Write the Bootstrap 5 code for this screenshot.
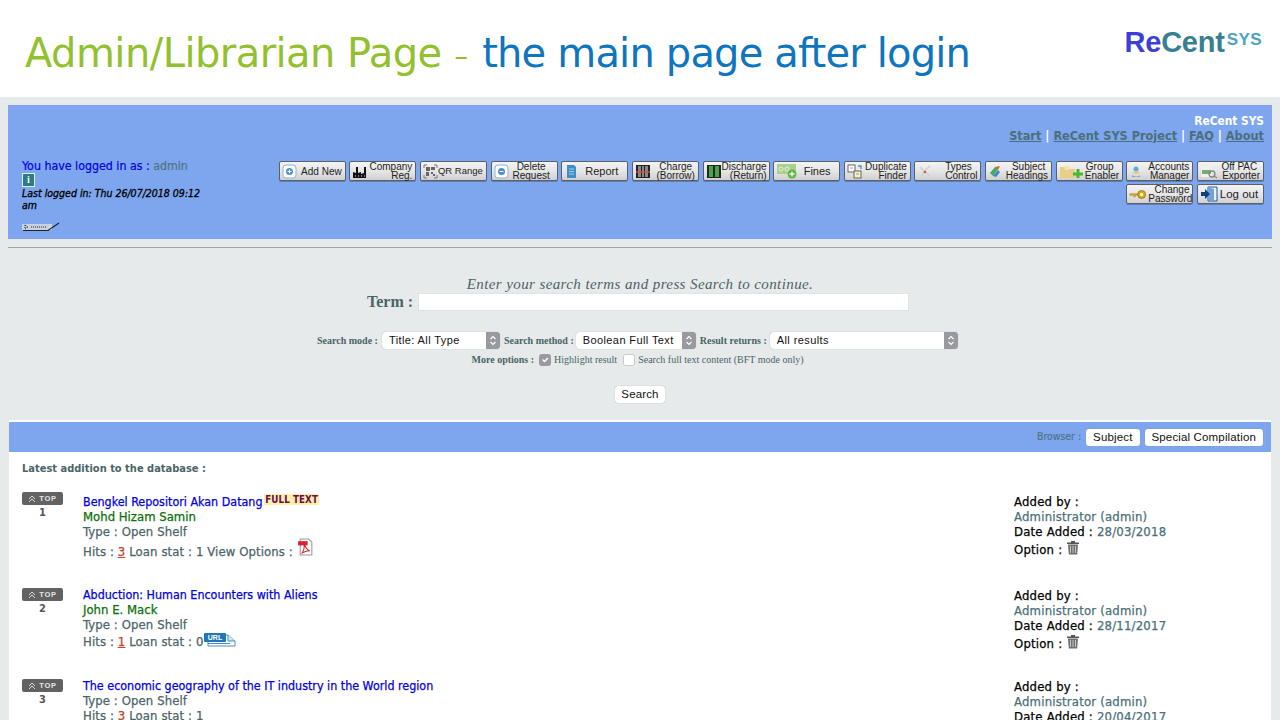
<!DOCTYPE html>
<html lang="en">
<head>
    <meta charset="UTF-8">
    <meta name="viewport" content="width=device-width, initial-scale=1.0">
    <title>Admin/Librarian Page</title>
    <link href="https://cdn.jsdelivr.net/npm/bootstrap@5.3.0/dist/css/bootstrap.min.css" rel="stylesheet">
    <style>
        html, body { height: 720px; overflow: hidden; }
        body { background: #e6eaea; color: #4a6468; font-family: "DejaVu Sans Condensed", "DejaVu Sans", Verdana, sans-serif; font-stretch: condensed; font-size: 12px; }

        .slide-head { height: 97px; background: #fff; padding: 25px 10px 0 25px; }
        .slide-title { font-family: "DejaVu Sans", sans-serif; font-stretch: normal; font-size: 40px; line-height: 56px; margin: 0; font-weight: 400; letter-spacing: -.82px; color: #0f75bc; }
        .slide-title em { font-style: normal; color: #93c02f; letter-spacing: -.55px; }
        .slide-title span { color: #93c02f; font-size: 27px; margin: 0 3px 0 1px; vertical-align: 2px; }
        .logo-word { font-family: "Liberation Sans", sans-serif; font-weight: 700; font-size: 29px; line-height: 34px; letter-spacing: -.2px; margin-right: 8px; color: #37808f; }
        .logo-word b { color: #3b3fd8; }
        .logo-word sup { font-size: 17px; top: -7px; color: #4ba3bf; letter-spacing: .4px; margin-left: 2px; }

        .top-panel { background: #7ea6ee; margin: 8px 8px 0; height: 134px; padding: 9px 8px 0 14px; }
        .site-name { color: #fff; font-weight: 700; font-size: 11.8px; line-height: 14px; }
        .site-links { font-weight: 700; font-size: 12.6px; line-height: 16px; color: #fff; }
        .site-links a { color: #4a6f7c; }
        .user-col { width: 190px; flex-shrink: 0; margin-top: 15px; }
        .logged-as { color: #0000e0; font-size: 12.3px; line-height: 14px; -webkit-text-stroke: .2px; }
        .logged-as span { color: #4c757c; }
        .info-badge { display: block; width: 13px; height: 14px; background: #2f7c80; border: 1px solid #d8f0f0; color: #fff; font: 700 10px/12px "Liberation Serif", serif; text-align: center; margin: 0 0 1px; }
        .last-login { color: #000; font-style: italic; font-size: 10.5px; line-height: 11.5px; -webkit-text-stroke: .3px; }
        .ruler-pic { display: block; margin-top: 11px; }
        .tool-wrap { width: 986px; margin-left: auto; margin-top: 17px; }
        .tool-grid { display: flex; flex-wrap: wrap; justify-content: flex-end; column-gap: 3.65px; row-gap: 3px; }
        .tool-btn { width: 67px; height: 20px; padding: 0 2px; display: flex; align-items: center; border: 1px solid #59606a; border-radius: 2px; background: linear-gradient(#f4f4f4, #e4e4e4 55%, #d0d0d0); font-family: "Liberation Sans", Arial, sans-serif; font-stretch: normal; font-size: 10px; line-height: 9px; color: #222; box-shadow: 0 1px 0 #5f7fb5; }
        .tool-btn svg { flex-shrink: 0; }
        .tool-btn span { flex: 1; text-align: right; padding-right: 1px; white-space: nowrap; }
        .tool-btn span.tool-mid { text-align: center; line-height: 12px; font-size: 11px; }
        .tool-btn span.tool-two { text-align: center; line-height: 9px; }
        .tool-btn span.tool-big { text-align: center; line-height: 12px; font-size: 11.5px; }
        .tool-btn span.tool-tight { font-size: 9.5px; line-height: 12px; padding-right: 2px; }

        .rule-line { margin: 8px 8px 0; border-top: 1px solid #9fa5a5; opacity: 1; }
        .search-box { text-align: center; font-family: "Liberation Serif", "Times New Roman", serif; font-stretch: normal; height: 172px; padding-top: 27px; }
        .search-hint { font-style: italic; font-size: 15px; line-height: 18px; letter-spacing: .4px; }
        .term-row { padding-left: 367px; gap: 5px; }
        .term-label { font-weight: 700; font-size: 16px; line-height: 18px; }
        .term-input { width: 491px; height: 18px; border: 1px solid #dfe3e3; border-radius: 0; padding: 0 4px; min-height: 0; }
        .mode-row { margin-top: 21px; padding-left: 317px; font-size: 10px; font-weight: 700; }
        .mac-select { height: 17px; min-height: 0; margin: 0 5px 0 2px; padding: 0 14px 0 7px; border: 0; border-radius: 4px; font-family: "Liberation Sans", Arial, sans-serif; font-size: 11px; line-height: 17px; color: #111; letter-spacing: .4px; box-shadow: 0 0 1px #999;
            background: #fff url("data:image/svg+xml,%3Csvg xmlns='http://www.w3.org/2000/svg' width='14' height='17'%3E%3Crect width='14' height='17' fill='%23989aa0'/%3E%3Cpath d='M4.500 7 7 4.500 9.500 7M4.500 10 7 12.500 9.500 10' fill='none' stroke='%23fff' stroke-width='1.200'/%3E%3C/svg%3E") no-repeat right center; }
        .select-mode { width: 118px; margin-left: 4px; margin-right: 4px; }
        .select-method { width: 120px; margin-right: 4px; }
        .select-result { width: 188px; margin-left: 3px; }
        .more-row { margin-top: 2px; padding-right: 5px; font-size: 10px; line-height: 17px; }
        .more-row b { margin-right: 5px; }
        .more-row span { margin-left: 3px; }
        .opt-gap { margin-right: 6px; }
        .opt-check { width: 12px; height: 12px; margin: 0; border: 1px solid #c8c8c8; border-radius: 3px; background-color: #fff; }
        .opt-check:checked { background-color: #989aa0; border-color: #989aa0; }
        .plain-btn { padding: 0 7px; height: 17px; background: #fff; border: 0; border-radius: 3px; font-family: "Liberation Sans", Arial, sans-serif; font-stretch: normal; font-size: 11.5px; line-height: 17px; color: #111; letter-spacing: .15px; box-shadow: 0 0 1px #888; }
        .go-btn { margin-top: 18px; padding: 0 6px; }

        .result-box { background: #fff; margin: 0 9px; padding-top: 2px; height: 320px; }
        .browse-bar { background: #7ea6ee; height: 30px; padding-right: 8px; gap: 5px; font-size: 10.4px; color: #4d7585; -webkit-text-stroke: .2px; }
        .browse-bar .plain-btn { -webkit-text-stroke: 0; }
        .latest-head { font-weight: 700; font-size: 11px; line-height: 14px; padding: 10px 0 0 13px; margin-bottom: 16px; color: #4a6468; }
        .book-row { padding-left: 13px; }
        .rank-col { width: 61px; flex-shrink: 0; }
        .top-tag { width: 41px; height: 13px; background: #626262; border-radius: 2px; color: #e6e6e6; font-family: "Liberation Sans", Arial, sans-serif; font-stretch: normal; font-weight: 700; font-size: 7.5px; line-height: 13px; letter-spacing: .8px; gap: 3px; }
        .rank-num { width: 41px; text-align: center; font-weight: 700; font-size: 11px; line-height: 14px; margin-top: 1px; color: #555; }
        .book-main { width: 931px; flex-shrink: 0; margin-top: -1px; font-size: 13px; line-height: 15px; letter-spacing: .1px; -webkit-text-stroke: .25px; }
        .book-title { color: #0000e0; font-size: 12.4px; letter-spacing: 0; }
        .book-author { color: #0a700a; letter-spacing: 0; }
        .hits { margin-top: 2px; line-height: 16px; }
        .hits a { color: #b5472e; }
        .full-tag { background: #fdeeaa; color: #6a0a50; font-size: 9.7px; font-weight: 700; vertical-align: 3px; margin-left: -2px; padding: 0 1px; -webkit-text-stroke: 0; }
        .book-side { font-size: 13px; line-height: 15px; letter-spacing: .2px; color: #000; -webkit-text-stroke: .25px; }
        .book-side i { font-style: normal; color: #4a6f78; }
        .side-opt { margin-top: 3px; }
        .bin-icon { margin-top: -6px; vertical-align: -1px; }
        .row-one { height: 96px; }
        .row-one .book-main { margin-top: 0; }
        .row-one .hits { margin-top: 5px; }
        .row-one .book-side { padding-top: 2px; }
        .row-two { height: 91px; }
        .row-three .hits { margin-top: 0; }
        .pdf-icon { margin-top: -8px; vertical-align: 0; }
        .url-icon { margin-top: -8px; margin-left: -3px; vertical-align: -2px; }
    </style>
</head>
<body>
    <svg width="0" height="0" class="d-block position-absolute">
        <symbol id="ico-plus" viewBox="0 0 15 15"><rect x="1" y="1" width="13" height="13" rx="3" fill="#fff" stroke="#8fb4d8"/><circle cx="7.500" cy="7.500" r="3.500" fill="#4f8fd0"/><path d="M5.500 7.500h4M7.500 5.500v4" stroke="#fff"/></symbol>
        <symbol id="ico-minus" viewBox="0 0 15 15"><rect x="1" y="1" width="13" height="13" rx="3" fill="#fff" stroke="#8fb4d8"/><circle cx="7.500" cy="7.500" r="3.500" fill="#4f8fd0"/><path d="M5.500 7.500h4" stroke="#fff"/></symbol>
        <symbol id="ico-factory" viewBox="0 0 15 15"><path d="M1 14V8l3 1V3h2v6l3-1v2l3-1V3h2v11z" fill="#111"/><path d="M3 12h1M6 12h1M9 12h1M12 12h1" stroke="#ddd"/></symbol>
        <symbol id="ico-qr" viewBox="0 0 15 15"><path d="M1 4V1h3M11 1h3v3M14 11v3h-3M4 14H1v-3" fill="none" stroke="#777"/><path d="M3 3h4v4H3zM8 3h4v3H8zM3 8h3v4H3zM8 8h2v2H8zM10 10h2v2h-2z" fill="#666"/></symbol>
        <symbol id="ico-doc" viewBox="0 0 15 15"><path d="M3 1h7l2 2v11H3z" fill="#3f8fc4"/><path d="M5 5h5M5 7.500h5M5 10h5" stroke="#bfe0f2" stroke-width=".8"/></symbol>
        <symbol id="ico-charge" viewBox="0 0 16 15"><rect x="1" y="1" width="14" height="13" fill="#222"/><path d="M3 2h3v11H3zM7 2h2v11H7zM10 2h3v11h-3z" fill="#888"/><path d="M1 8h14" stroke="#e04848" stroke-width="1.400"/></symbol>
        <symbol id="ico-return" viewBox="0 0 16 15"><rect x="1" y="1" width="14" height="13" fill="#1e2a1e"/><path d="M3 2h4v11H3zM9 2h4v11H9z" fill="#4f9f4f"/></symbol>
        <symbol id="ico-fines" viewBox="0 0 22 16"><rect x="1" y="1" width="19" height="10" fill="#a9d08e"/><circle cx="5" cy="6" r="2" fill="none" stroke="#e6f2d8"/><circle cx="11" cy="6" r="2" fill="none" stroke="#e6f2d8"/><circle cx="16" cy="11" r="4.500" fill="#62b544"/><path d="M13.500 11h5M16 8.500v5" stroke="#fff" stroke-width="1.300"/></symbol>
        <symbol id="ico-dup" viewBox="0 0 16 15"><rect x="1" y="1" width="7" height="7" fill="#fff" stroke="#666"/><rect x="7" y="7" width="7" height="7" fill="#f6eecc" stroke="#666"/><path d="M11 2h3v3" fill="none" stroke="#3f8fc4" stroke-width="1.300"/><path d="M3 4h3M9 10h3" stroke="#999"/></symbol>
        <symbol id="ico-types" viewBox="0 0 18 15"><path d="M3 3l4 4 6-5M7 7l-2 6M7 7l6 5" fill="none" stroke="#cfcfcf" stroke-width="1.500"/><circle cx="8" cy="8" r="1.300" fill="#d85858"/></symbol>
        <symbol id="ico-subject" viewBox="0 0 15 15"><path d="M2 9l5-6 3 2-5 7z" fill="#3fae58"/><path d="M7 3l5-1-2 4z" fill="#e05a38"/><path d="M5 12l5-6 2 2-4 5z" fill="#3f7fd0"/></symbol>
        <symbol id="ico-group" viewBox="0 0 26 15"><path d="M1 3h5l2 2h8v9H1z" fill="#e8cf88"/><circle cx="8" cy="4" r="2.500" fill="#f2e2b0"/><path d="M14 10h10M19 5v9" stroke="#49b82f" stroke-width="3"/></symbol>
        <symbol id="ico-acct" viewBox="0 0 15 15"><circle cx="7" cy="5" r="2.500" fill="#5fa8d8"/><path d="M3 9c3-2 6-2 8 0-2 1-5 1-8 0z" fill="#e8c860"/><path d="M3 11c3 2 6 2 8 0v2H3z" fill="#5fa8d8"/></symbol>
        <symbol id="ico-opac" viewBox="0 0 18 15"><rect x="1" y="2" width="11" height="11" fill="#eef1ee"/><rect x="2" y="6" width="9" height="4" fill="#6fb06f"/><circle cx="12" cy="10" r="3" fill="none" stroke="#888" stroke-width="1.300"/><path d="M14 12l3 2" stroke="#888" stroke-width="1.300"/></symbol>
        <symbol id="ico-key" viewBox="0 0 24 14"><circle cx="16" cy="7" r="5" fill="#d8b020" stroke="#8a6a10"/><circle cx="16" cy="7" r="2" fill="#fff3c0"/><path d="M1 6h10v2H8v2H6V8H1z" fill="#d8b020" stroke="#8a6a10" stroke-width=".5"/></symbol>
        <symbol id="ico-logout" viewBox="0 0 18 16"><path d="M8 1h9v14H8z" fill="#e8f0f8" stroke="#245a92"/><path d="M8 1l6 2v12l-6-1z" fill="#6ea4d8"/><path d="M1 6h4V3l5 5-5 5v-3H1z" fill="#123f78"/></symbol>
        <symbol id="ico-bin" viewBox="0 0 14 15"><path d="M1 2.500h12v1.500H1zM5 2.500V1h4v1.500" fill="#555"/><path d="M2 4.500h10l-.8 10H2.800z" fill="#6f6f6f"/><path d="M4.500 6v7M7 6v7M9.500 6v7" stroke="#d0d0d0" stroke-width=".9"/></symbol>
        <symbol id="ico-chev" viewBox="0 0 8 8"><path d="M1 4l3-3 3 3M1 7l3-3 3 3" fill="none" stroke="#ddd"/></symbol>
    </svg>

    <header class="slide-head d-flex justify-content-between align-items-start">
        <h1 class="slide-title"><em>Admin/Librarian Page</em> <span>&ndash;</span> the main page after login</h1>
        <div class="logo-word"><b>Re</b>Cent<sup>SYS</sup></div>
    </header>

    <section class="top-panel">
        <div class="text-end">
            <div class="site-name">ReCent SYS</div>
            <div class="site-links"><a href="#">Start</a> | <a href="#">ReCent SYS Project</a> | <a href="#">FAQ</a> | <a href="#">About</a></div>
        </div>
        <div class="d-flex">
            <div class="user-col">
                <div class="logged-as">You have logged in as : <span>admin</span></div>
                <span class="info-badge">i</span>
                <div class="last-login">Last logged in: Thu 26/07/2018 09:12 am</div>
                <svg class="ruler-pic" width="38" height="10" viewBox="0 0 38 10"><rect x="0" y="2" width="30" height="6" fill="#c9d2de"/><path d="M3 3v4M3 3l3 2-3 2M9 5h16" stroke="#222" stroke-dasharray="1 1" fill="none"/><path d="M1 8.500h25L37 1" fill="none" stroke="#222" stroke-width="1.200"/></svg>
            </div>
            <div class="tool-wrap">
                <div class="tool-grid">
                    <button class="tool-btn" type="button"><svg width="15" height="15"><use href="#ico-plus"/></svg><span>Add New</span></button>
                    <button class="tool-btn" type="button"><svg width="15" height="15"><use href="#ico-factory"/></svg><span>Company<br>Reg.</span></button>
                    <button class="tool-btn" type="button"><svg width="15" height="15"><use href="#ico-qr"/></svg><span class="tool-tight">QR Range</span></button>
                    <button class="tool-btn" type="button"><svg width="15" height="15"><use href="#ico-minus"/></svg><span class="tool-two">Delete<br>Request</span></button>
                    <button class="tool-btn" type="button"><svg width="15" height="15"><use href="#ico-doc"/></svg><span class="tool-mid">Report</span></button>
                    <button class="tool-btn" type="button"><svg width="16" height="15"><use href="#ico-charge"/></svg><span>Charge&nbsp;<br>(Borrow)</span></button>
                    <button class="tool-btn" type="button"><svg width="16" height="15"><use href="#ico-return"/></svg><span>Discharge<br>(Return)</span></button>
                    <button class="tool-btn" type="button"><svg width="22" height="16"><use href="#ico-fines"/></svg><span class="tool-mid">Fines</span></button>
                    <button class="tool-btn" type="button"><svg width="16" height="15"><use href="#ico-dup"/></svg><span>Duplicate<br>Finder</span></button>
                    <button class="tool-btn" type="button"><svg width="18" height="15"><use href="#ico-types"/></svg><span>Types&nbsp;&nbsp;<br>Control</span></button>
                    <button class="tool-btn" type="button"><svg width="15" height="15"><use href="#ico-subject"/></svg><span>Subject&nbsp;<br>Headings</span></button>
                    <button class="tool-btn" type="button"><svg width="26" height="15"><use href="#ico-group"/></svg><span>Group&nbsp;&nbsp;<br>Enabler</span></button>
                    <button class="tool-btn" type="button"><svg width="15" height="15"><use href="#ico-acct"/></svg><span>Accounts<br>Manager</span></button>
                    <button class="tool-btn" type="button"><svg width="18" height="15"><use href="#ico-opac"/></svg><span>Off PAC&nbsp;<br>Exporter</span></button>
                    <button class="tool-btn" type="button"><svg width="19" height="11"><use href="#ico-key"/></svg><span>Change&nbsp;<br>Password</span></button>
                    <button class="tool-btn" type="button"><svg width="18" height="16"><use href="#ico-logout"/></svg><span class="tool-big">Log out</span></button>
                </div>
            </div>
        </div>
    </section>

    <hr class="rule-line">

    <section class="search-box">
        <div class="search-hint">Enter your search terms and press Search to continue.</div>
        <div class="term-row d-flex align-items-center">
            <span class="term-label">Term :</span>
            <input type="text" class="form-control term-input">
        </div>
        <div class="mode-row d-flex align-items-center">
            <span>Search mode :</span>
            <select class="form-select mac-select select-mode"><option>Title: All Type</option></select>
            <span>Search method :</span>
            <select class="form-select mac-select select-method"><option>Boolean Full Text</option></select>
            <span>Result returns :</span>
            <select class="form-select mac-select select-result"><option>All results</option></select>
        </div>
        <div class="more-row d-flex align-items-center justify-content-center">
            <b>More options :</b>
            <input class="form-check-input opt-check" type="checkbox" checked>
            <span class="opt-gap">Highlight result</span>
            <input class="form-check-input opt-check" type="checkbox">
            <span>Search full text content (BFT mode only)</span>
        </div>
        <button type="button" class="plain-btn go-btn">Search</button>
    </section>

    <section class="result-box">
        <div class="browse-bar d-flex align-items-center justify-content-end">
            <span>Browser :</span>
            <button type="button" class="plain-btn">Subject</button>
            <button type="button" class="plain-btn">Special Compilation</button>
        </div>
        <div class="latest-head">Latest addition to the database :</div>

        <div class="book-row row-one d-flex">
            <div class="rank-col"><div class="top-tag d-flex justify-content-center align-items-center"><svg width="8" height="8"><use href="#ico-chev"/></svg>TOP</div><div class="rank-num">1</div></div>
            <div class="book-main">
                <div><span class="book-title">Bengkel Repositori Akan Datang</span> <span class="full-tag">FULL TEXT</span></div>
                <div class="book-author">Mohd Hizam Samin</div>
                <div>Type : Open Shelf</div>
                <div class="hits">Hits : <a href="#">3</a> Loan stat : 1 View Options :
                    <svg class="pdf-icon" width="17" height="18" viewBox="0 0 16 17"><path d="M3 1h8l3 3v12H3z" fill="#fff" stroke="#999"/><path d="M1 3h9v4H1z" fill="#d8232a"/><path d="M5 14c2-3 2-6 2-8 1 3 2 5 5 6-3 0-5 1-7 2z" fill="none" stroke="#d8232a"/></svg>
                </div>
            </div>
            <div class="book-side">
                <div>Added by :</div>
                <div><i>Administrator (admin)</i></div>
                <div>Date Added : <i>28/03/2018</i></div>
                <div class="side-opt">Option : <svg class="bin-icon" width="14" height="15"><use href="#ico-bin"/></svg></div>
            </div>
        </div>

        <div class="book-row row-two d-flex">
            <div class="rank-col"><div class="top-tag d-flex justify-content-center align-items-center"><svg width="8" height="8"><use href="#ico-chev"/></svg>TOP</div><div class="rank-num">2</div></div>
            <div class="book-main">
                <div class="book-title">Abduction: Human Encounters with Aliens</div>
                <div class="book-author">John E. Mack</div>
                <div>Type : Open Shelf</div>
                <div class="hits">Hits : <a href="#">1</a> Loan stat : 0
                    <svg class="url-icon" width="32" height="16" viewBox="0 0 32 16"><path d="M4 3h20l7 6v5H4z" fill="#fff" stroke="#4a8fc0"/><path d="M24 3v6h7" fill="#cfe3f2" stroke="#4a8fc0"/><rect x="0" y="1" width="22" height="9" rx="1" fill="#1f76b8"/><text x="11" y="8" text-anchor="middle" font-family="Liberation Sans" font-weight="700" font-size="7" fill="#fff" stroke="none">URL</text><path d="M4 11.500h22" stroke="#4a8fc0"/></svg>
                </div>
            </div>
            <div class="book-side">
                <div>Added by :</div>
                <div><i>Administrator (admin)</i></div>
                <div>Date Added : <i>28/11/2017</i></div>
                <div class="side-opt">Option : <svg class="bin-icon" width="14" height="15"><use href="#ico-bin"/></svg></div>
            </div>
        </div>

        <div class="book-row row-three d-flex">
            <div class="rank-col"><div class="top-tag d-flex justify-content-center align-items-center"><svg width="8" height="8"><use href="#ico-chev"/></svg>TOP</div><div class="rank-num">3</div></div>
            <div class="book-main">
                <div class="book-title">The economic geography of the IT industry in the World region</div>
                <div>Type : Open Shelf</div>
                <div class="hits">Hits : <a href="#">3</a> Loan stat : 1</div>
            </div>
            <div class="book-side">
                <div>Added by :</div>
                <div><i>Administrator (admin)</i></div>
                <div>Date Added : <i>20/04/2017</i></div>
            </div>
        </div>
    </section>

    <script src="https://cdn.jsdelivr.net/npm/bootstrap@5.3.0/dist/js/bootstrap.bundle.min.js"></script>
</body>
</html>
